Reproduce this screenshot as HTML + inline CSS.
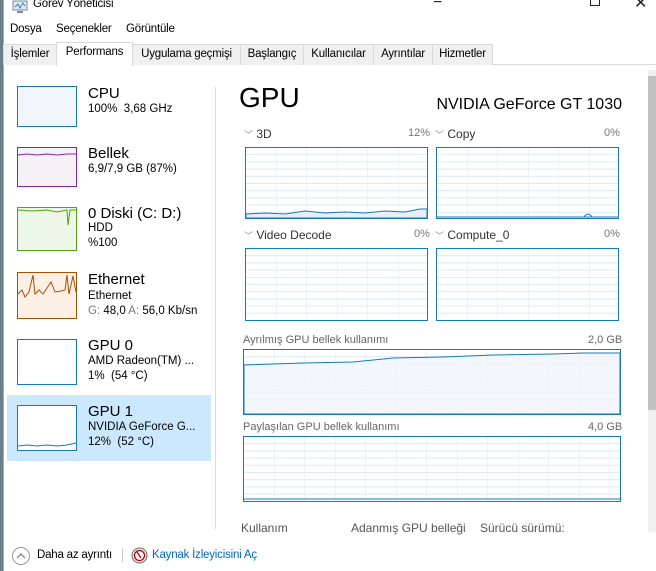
<!DOCTYPE html>
<html><head><meta charset="utf-8"><style>
*{margin:0;padding:0;box-sizing:border-box}
body{width:656px;height:571px;overflow:hidden;background:#fff;font-family:"Liberation Sans","DejaVu Sans",sans-serif;color:#000;position:relative}
.a{position:absolute;white-space:nowrap}
.tab{position:absolute;top:44px;height:21px;border:1px solid #d9d9d9;border-bottom:none;background:#f0f0f0;font-size:11.5px;letter-spacing:-0.2px;line-height:19px;text-align:center;color:#000;white-space:nowrap;overflow:hidden}
.th{position:absolute;left:17px;width:60px;border:1px solid}
.t1{font-size:15px}
.t2{font-size:11.5px}
.gl{font-size:12px;color:#333}
.gr{font-size:11px;color:#777}
.m{font-size:11.5px;letter-spacing:-0.2px}
</style></head><body>
<div class="a" style="left:0;top:0;width:3px;height:571px;background:#6a7f8c"></div>
<div class="a" style="left:3px;top:0;width:1px;height:571px;background:#aaa"></div>
<!-- title -->
<svg class="a" style="left:12px;top:0" width="16" height="14"><rect x="1" y="1" width="14" height="9" fill="#dfe9f2" stroke="#7a8a99"/><polyline points="3,7 6,4 8,8 11,3 13,6" fill="none" stroke="#3a7ac0"/><rect x="5" y="11" width="6" height="2" fill="#7a8a99"/></svg>
<div class="a m" style="left:33px;top:-2px">Görev Yöneticisi</div>
<div class="a" style="left:433px;top:-6px;font-size:16px;color:#222">−</div>
<div class="a" style="left:590px;top:-4px;width:10px;height:10px;border:1px solid #222"></div>
<div class="a" style="left:634px;top:-7px;font-size:16px;color:#222">✕</div>
<!-- menu -->
<div class="a m" style="left:10px;top:23px">Dosya</div>
<div class="a m" style="left:56px;top:23px">Seçenekler</div>
<div class="a m" style="left:126px;top:23px">Görüntüle</div>
<!-- tabs -->
<div class="a" style="left:4px;top:64px;width:652px;height:1px;background:#d9d9d9"></div>
<div class="tab" style="left:3px;width:54px">İşlemler</div>
<div class="tab" style="left:132px;width:109px">Uygulama geçmişi</div>
<div class="tab" style="left:240px;width:64px">Başlangıç</div>
<div class="tab" style="left:303px;width:71px">Kullanıcılar</div>
<div class="tab" style="left:373px;width:60px">Ayrıntılar</div>
<div class="tab" style="left:432px;width:61px">Hizmetler</div>
<div class="tab" style="left:56px;top:42px;width:77px;height:24px;background:#fff;z-index:2">Performans</div>
<!-- scrollbar -->
<div class="a" style="left:648px;top:70px;width:8px;height:462px;background:#f0f0f0"></div>
<div class="a" style="left:648px;top:76px;width:8px;height:334px;background:#c1c1c1"></div>
<!-- left pane -->
<div class="a" style="left:215px;top:87px;width:1px;height:442px;background:#ddd"></div>
<div class="a" style="left:7px;top:395px;width:204px;height:66px;background:#cce8ff"></div>

<div class="th" style="top:86px;height:41px;border-color:#1779ba;background:#f1f6fa"></div>
<div class="a t1" style="left:88px;top:85px">CPU</div>
<div class="a t2" style="left:88px;top:103px">100%&nbsp; 3,68 GHz</div>

<svg class="a" style="left:17px;top:147px" width="60" height="40"><rect x=".5" y=".5" width="59" height="39" fill="#f4f2f4" stroke="#8b1fb1"/><polyline points="1,8 10,7 20,8 30,7 40,8 50,7 59,7" fill="none" stroke="#8b1fb1"/></svg>
<div class="a t1" style="left:88px;top:145px">Bellek</div>
<div class="a t2" style="left:88px;top:163px">6,9/7,9 GB (87%)</div>

<svg class="a" style="left:17px;top:207px" width="60" height="44"><rect x=".5" y=".5" width="59" height="43" fill="#eef6e8" stroke="#4da60c"/><polyline points="1,3 15,4 30,3 40,5 50,3 51,18 53,3 59,3" fill="none" stroke="#4da60c"/></svg>
<div class="a t1" style="left:88px;top:205px">0 Diski (C: D:)</div>
<div class="a t2" style="left:88px;top:222px">HDD</div>
<div class="a t2" style="left:88px;top:237px">%100</div>

<svg class="a" style="left:17px;top:272px" width="60" height="47"><rect x=".5" y=".5" width="59" height="46" fill="#fcf0e6" stroke="#a74f01"/><polyline points="1,22 5,18 8,25 12,20 16,3 18,22 22,18 26,22 30,16 34,10 38,20 44,19 48,18 50,3 52,22 56,4 59,20" fill="none" stroke="#a74f01"/></svg>
<div class="a t1" style="left:88px;top:271px">Ethernet</div>
<div class="a t2" style="left:88px;top:290px">Ethernet</div>
<div class="a t2" style="left:88px;top:305px"><span style="color:#777">G:</span> 48,0 <span style="color:#777">A:</span> 56,0 Kb/sn</div>

<div class="th" style="top:339px;height:46px;border-color:#1779ba;background:#fff"></div>
<div class="a t1" style="left:88px;top:337px">GPU 0</div>
<div class="a t2" style="left:88px;top:355px">AMD Radeon(TM) ...</div>
<div class="a t2" style="left:88px;top:370px">1%&nbsp; (54 °C)</div>

<svg class="a" style="left:17px;top:405px" width="60" height="47"><rect x=".5" y=".5" width="59" height="45" fill="#fff" stroke="#1779ba"/><polyline points="1,41 10,40 20,41 30,40 40,41 50,40 59,38" fill="none" stroke="#1779ba"/></svg>
<div class="a t1" style="left:88px;top:403px">GPU 1</div>
<div class="a t2" style="left:88px;top:421px">NVIDIA GeForce G...</div>
<div class="a t2" style="left:88px;top:436px">12%&nbsp; (52 °C)</div>

<!-- right -->
<div class="a" style="left:239px;top:82px;font-size:28px">GPU</div>
<div class="a" style="right:34px;top:96px;font-size:16px">NVIDIA GeForce GT 1030</div>

<svg class="a" style="left:0;top:0;pointer-events:none" width="656" height="571">
<defs>
<pattern id="p" x="0" y="0" width="30.5" height="7.2" patternUnits="userSpaceOnUse"><path d="M0 0.5H30.5M0.5 0V7.2" stroke="#d9eaf7" fill="none"/></pattern>
</defs>
<g transform="translate(245,147)"><rect width="183" height="72" fill="url(#p)"/><path d="M1,67 L20,66 L40,67 L60,64 L80,66 L100,65 L120,66 L140,64 L160,65 L175,62 L182,62 V71 H1Z" fill="#e6f0f8" stroke="#1779ba"/><rect x=".5" y=".5" width="182" height="71" fill="none" stroke="#1779ba"/></g>
<g transform="translate(436,147)"><rect width="183" height="72" fill="url(#p)"/><path d="M1,70 H182 M148,70 q4,-6 8,0" stroke="#1779ba" fill="none"/><rect x=".5" y=".5" width="182" height="71" fill="none" stroke="#1779ba"/></g>
<g transform="translate(245,248)"><rect width="183" height="73" fill="url(#p)"/><rect x=".5" y=".5" width="182" height="72" fill="none" stroke="#1779ba"/></g>
<g transform="translate(436,248)"><rect width="183" height="73" fill="url(#p)"/><rect x=".5" y=".5" width="182" height="72" fill="none" stroke="#1779ba"/></g>
<g transform="translate(243,349)"><rect width="378" height="66" fill="url(#p)"/><path d="M1,16 L60,14 L110,13 L150,9 L200,8 L250,6 L310,5 L340,4 L377,4 V65 H1Z" fill="#f0f5fa" fill-opacity=".8" stroke="#1779ba"/><rect x=".5" y=".5" width="377" height="65" fill="none" stroke="#1779ba"/></g>
<g transform="translate(243,436)"><rect width="378" height="66" fill="url(#p)"/><path d="M1,63 H377" stroke="#1779ba"/><rect x=".5" y=".5" width="377" height="65" fill="none" stroke="#1779ba"/></g>
</svg>
<div class="a gl" style="left:244px;top:127px"><span style="color:#888;font-size:9px">﹀</span> 3D</div>
<div class="a gr" style="left:408px;top:127px">12%</div>
<div class="a gl" style="left:435px;top:127px"><span style="color:#888;font-size:9px">﹀</span> Copy</div>
<div class="a gr" style="left:604px;top:127px">0%</div>
<div class="a gl" style="left:244px;top:228px"><span style="color:#888;font-size:9px">﹀</span> Video Decode</div>
<div class="a gr" style="left:414px;top:228px">0%</div>
<div class="a gl" style="left:435px;top:228px"><span style="color:#888;font-size:9px">﹀</span> Compute_0</div>
<div class="a gr" style="left:604px;top:228px">0%</div>
<div class="a gr" style="left:243px;top:334px;color:#666">Ayrılmış GPU bellek kullanımı</div>
<div class="a gr" style="left:588px;top:334px;color:#666">2,0 GB</div>
<div class="a gr" style="left:243px;top:421px;color:#666">Paylaşılan GPU bellek kullanımı</div>
<div class="a gr" style="left:588px;top:421px;color:#666">4,0 GB</div>
<div class="a" style="left:241px;top:521px;font-size:12px;color:#555">Kullanım</div>
<div class="a" style="left:351px;top:521px;font-size:12px;color:#555">Adanmış GPU belleği</div>
<div class="a" style="left:480px;top:521px;font-size:12px;color:#555">Sürücü sürümü:</div>
<!-- footer -->
<svg class="a" style="left:11px;top:546px" width="20" height="20"><circle cx="10" cy="10" r="8.5" fill="#fff" stroke="#999"/><polyline points="6,12 10,8 14,12" fill="none" stroke="#777" stroke-width="1.2"/></svg>
<div class="a" style="left:37px;top:549px;font-size:11.5px;letter-spacing:-0.2px">Daha az ayrıntı</div>
<div class="a" style="left:122px;top:548px;width:1px;height:14px;background:#ccc"></div>
<svg class="a" style="left:131px;top:547px" width="17" height="17"><circle cx="8.5" cy="8.5" r="7.5" fill="#eee" stroke="#666"/><circle cx="8.5" cy="8.5" r="5" fill="#fff" stroke="#b00" stroke-width="1.3"/><line x1="6" y1="5" x2="10" y2="11" stroke="#b00" stroke-width="1.3"/></svg>
<div class="a" style="left:152px;top:549px;font-size:11.5px;letter-spacing:-0.2px;color:#0066cc">Kaynak İzleyicisini Aç</div>
</body></html>
